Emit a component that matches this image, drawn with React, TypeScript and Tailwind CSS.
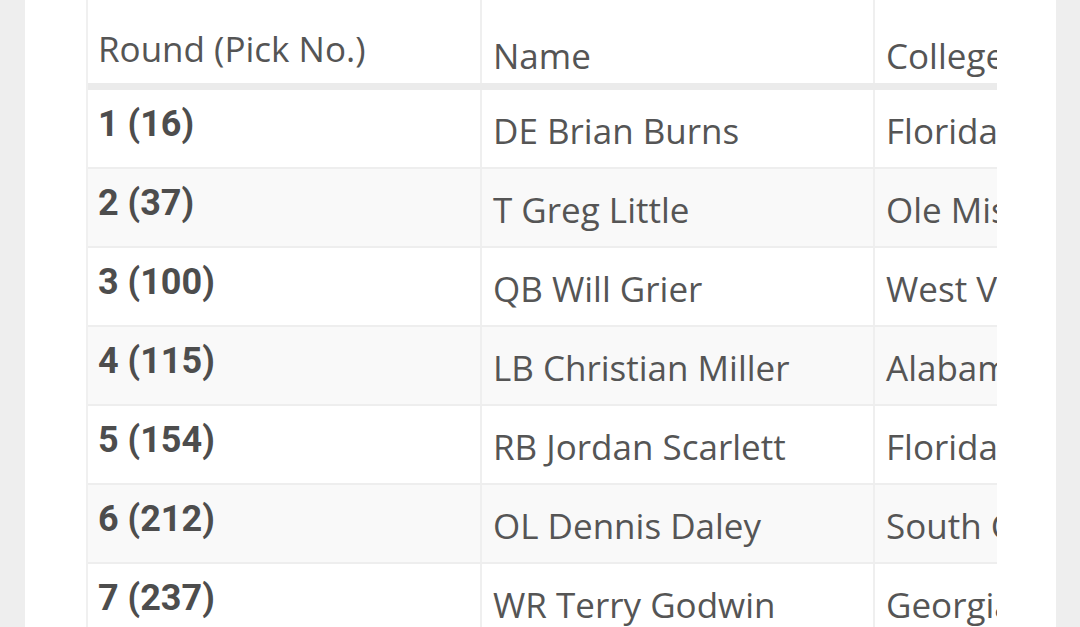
import React from "react";

const rows = [
  ["1 (16)", "DE Brian Burns", "Florida State"],
  ["2 (37)", "T Greg Little", "Ole Miss"],
  ["3 (100)", "QB Will Grier", "West Virginia"],
  ["4 (115)", "LB Christian Miller", "Alabama"],
  ["5 (154)", "RB Jordan Scarlett", "Florida"],
  ["6 (212)", "OL Dennis Daley", "South Carolina"],
  ["7 (237)", "WR Terry Godwin", "Georgia"],
];

export default function App() {
  return (
    <div className="flex h-[627px] w-[1080px] overflow-hidden bg-[#eeeeee]">
      <div className="ml-[25px] h-full w-[1031px] bg-white pl-[61px]">
        <div className="w-[911px] overflow-hidden">
          <div className="w-[1300px] border-l-2 border-[#f0f0f0] text-[#555555]">
            <div className="flex h-[90px] border-b-[7px] border-[#ebebeb] font-['Open_Sans',sans-serif] text-[35px]">
              <div className="w-[394px] shrink-0 border-r-2 border-[#efefef] pl-[10px] pt-[28px] leading-[42px]">Round (Pick No.)</div>
              <div className="w-[393px] shrink-0 border-r-2 border-[#efefef] pl-[11px] pt-[35px] leading-[42px]">Name</div>
              <div className="w-[400px] shrink-0 pl-[11px] pt-[35px] leading-[42px]">College</div>
            </div>
            {rows.map((r, i) => (
              <div
                key={i}
                className={`flex h-[79px] border-b-2 border-[#eeeeee] ${i % 2 === 1 ? "bg-[#f9f9f9]" : "bg-white"}`}
              >
                <div className="w-[394px] shrink-0 border-r-2 border-[#efefef] pl-[10px] pt-[14px] font-['Roboto',sans-serif] text-[36px] font-bold leading-[40px] text-[#4d4d4d]">
                  {r[0]}
                </div>
                <div className="w-[393px] shrink-0 border-r-2 border-[#efefef] pl-[11px] pt-[19px] font-['Open_Sans',sans-serif] text-[35px] leading-[44px]">
                  {r[1]}
                </div>
                <div className="w-[400px] shrink-0 whitespace-nowrap pl-[11px] pt-[19px] font-['Open_Sans',sans-serif] text-[35px] leading-[44px]">
                  {r[2]}
                </div>
              </div>
            ))}
          </div>
        </div>
      </div>
    </div>
  );
}
